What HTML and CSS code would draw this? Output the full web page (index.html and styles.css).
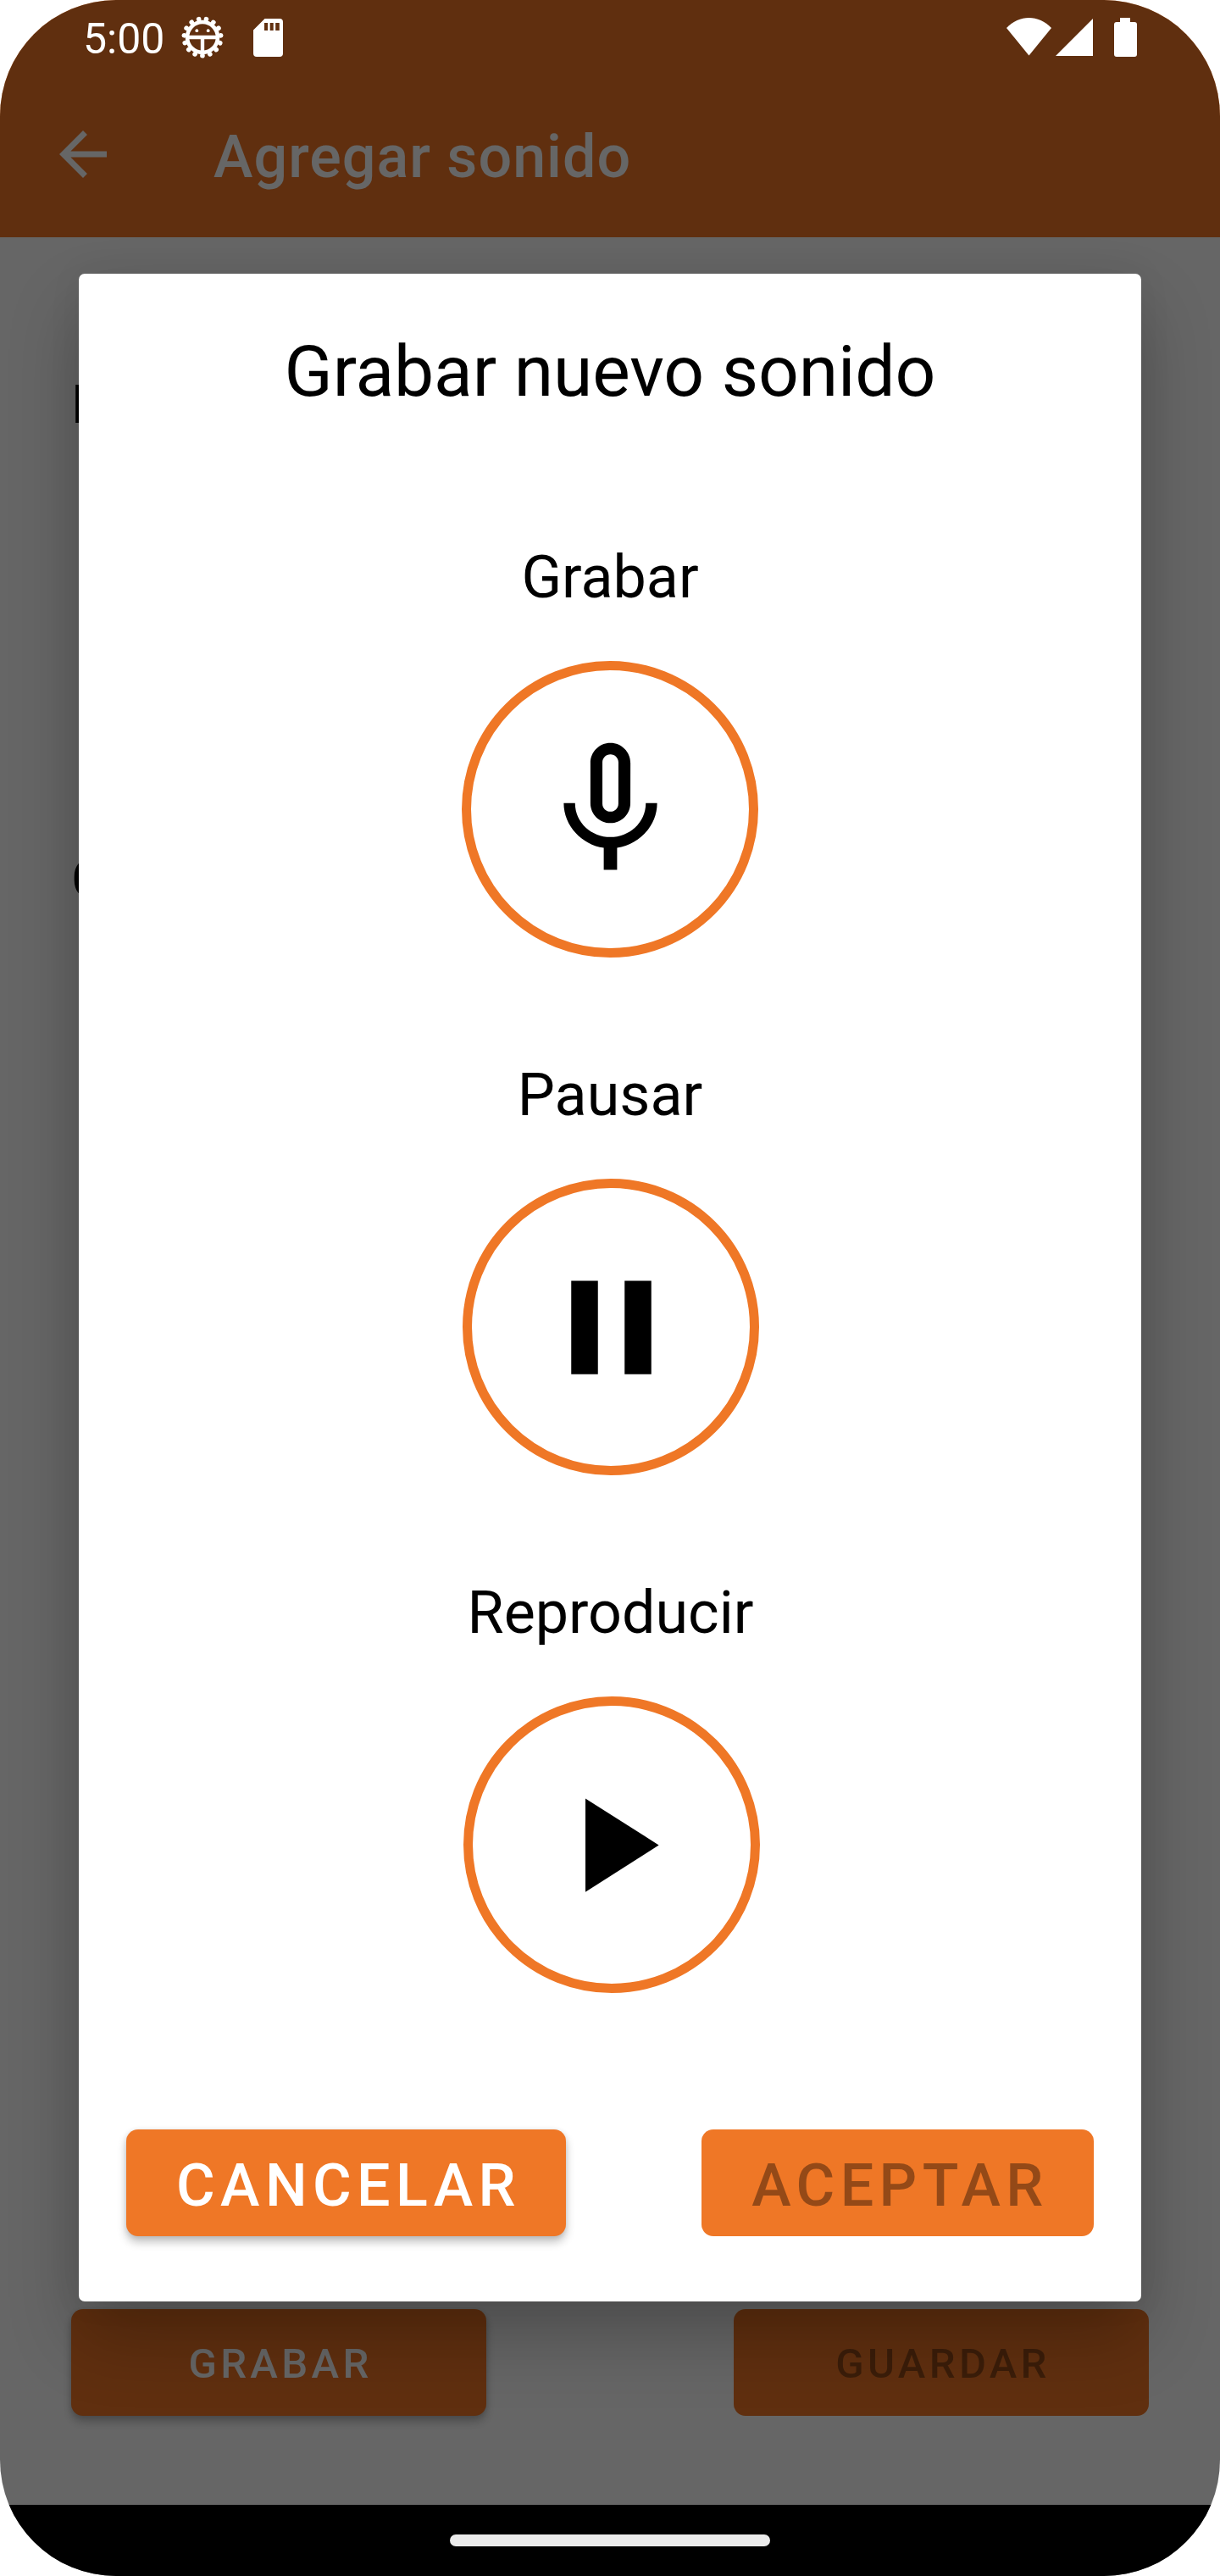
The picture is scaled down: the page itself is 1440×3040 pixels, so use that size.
FILE: index.html
```html
<!DOCTYPE html>
<html lang="es">
<head>
<meta charset="utf-8">
<title>Agregar sonido</title>
<link rel="stylesheet" href="styles.css">
</head>
<body>
<div class="screen">
  <header class="header">
    <div class="status-bar">
      <span class="time">5:00</span>
      <svg class="icon-debug" viewBox="-25 -25 50 50">
        <circle r="18" fill="none" stroke="#fff" stroke-width="4.600"/>
        <circle r="21.800" fill="none" stroke="#fff" stroke-width="5.600" stroke-linecap="round" pathLength="150" stroke-dasharray="0.1 9.9" stroke-dashoffset="-7.500"/>
        <path d="M-17 0H17M0 0V17" stroke="#fff" stroke-width="4.400"/>
        <circle cx="-6.700" cy="-7.800" r="1.900" fill="#fff"/>
        <circle cx="6.700" cy="-7.800" r="1.900" fill="#fff"/>
      </svg>
      <svg class="icon-sd" viewBox="0 0 35 45"><path fill="#fff" fill-rule="evenodd" d="M13.500 0H31a4 4 0 0 1 4 4V41a4 4 0 0 1-4 4H4a4 4 0 0 1-4-4V13.500ZM13 5v9h4V5ZM19.700 5v9h4V5ZM26.200 5v9h4.600V5Z"/></svg>
      <span class="spacer"></span>
      <svg class="icon-wifi" viewBox="0 0 53 45"><path fill="#fff" d="M0 12C15-4 38-4 53 12L26.500 44.500Z"/></svg>
      <svg class="icon-signal" viewBox="0 0 44 44"><path fill="#fff" d="M44 0V44H0Z"/></svg>
      <svg class="icon-battery" viewBox="0 0 27 46"><path fill="#fff" d="M7 0H19V5H24a3 3 0 0 1 3 3V43a3 3 0 0 1-3 3H3a3 3 0 0 1-3-3V8a3 3 0 0 1 3-3H7Z"/></svg>
    </div>
    <div class="toolbar">
      <svg class="icon-back" viewBox="0 0 24 24"><path fill="#fff" d="M20 11H7.830l5.590-5.590L12 4l-8 8 8 8 1.410-1.410L7.830 13H20v-2z"/></svg>
      <h1 class="toolbar-title">Agregar sonido</h1>
    </div>
  </header>
  <main class="form">
    <div class="field-label">N</div>
    <div class="field-label field-label-second">C</div>
    <div class="form-actions">
      <button class="btn btn-form">GRABAR</button>
      <button class="btn btn-form btn-disabled">GUARDAR</button>
    </div>
  </main>
  <footer class="nav-bar"><span class="nav-handle"></span></footer>
  <div class="scrim"></div>
  <section class="dialog">
    <h2 class="dialog-title">Grabar nuevo sonido</h2>
    <div class="control">
      <span class="control-label">Grabar</span>
      <span class="round-btn">
        <svg viewBox="0 0 24 24"><path d="M12 14c1.660 0 2.990-1.340 2.990-3L15 5c0-1.660-1.340-3-3-3S9 3.340 9 5v6c0 1.660 1.340 3 3 3zm-1.200-9.100c0-.66.54-1.200 1.200-1.200.66 0 1.200.54 1.200 1.200l-.01 6.200c0 .66-.53 1.200-1.190 1.200-.66 0-1.200-.54-1.200-1.200V4.900zm6.500 6.100c0 3-2.540 5.100-5.300 5.100S6.700 14 6.700 11H5c0 3.410 2.720 6.230 6 6.720V21h2v-3.280c3.280-.48 6-3.300 6-6.720h-1.700z"/></svg>
      </span>
    </div>
    <div class="control">
      <span class="control-label">Pausar</span>
      <span class="round-btn round-btn-pause">
        <svg viewBox="0 0 24 24"><path d="M6 19h4V5H6v14zm8-14v14h4V5h-4z"/></svg>
      </span>
    </div>
    <div class="control">
      <span class="control-label control-label-play">Reproducir</span>
      <span class="round-btn round-btn-play">
        <svg viewBox="0 0 24 24"><path d="M8 5v14l11-7z"/></svg>
      </span>
    </div>
    <div class="dialog-actions">
      <button class="btn btn-dialog btn-cancel">CANCELAR</button>
      <button class="btn btn-dialog btn-accept btn-disabled">ACEPTAR</button>
    </div>
  </section>
</div>
</body>
</html>
```
FILE: styles.css
```css
* { box-sizing: border-box; }

body {
  margin: 0;
  background: #fff;
  font-family: Roboto, sans-serif;
}

h1, h2 { margin: 0; }
svg { display: block; flex: none; }

.screen {
  position: relative;
  display: flex;
  flex-direction: column;
  width: 1440px;
  height: 3040px;
  overflow: hidden;
  border-radius: 137px;
  background: #fff;
}

/* Header */
.header { height: 280px; background: #ef7726; }

.status-bar {
  position: relative;
  z-index: 2;
  display: flex;
  align-items: flex-start;
  height: 84px;
  padding: 0 98px 0 98px;
  color: #fff;
}
.time { width: 116px; font-size: 50px; line-height: 92px; }
.icon-debug { width: 50px; height: 50px; margin-top: 19px; }
.icon-sd { width: 35px; height: 45px; margin: 22px 0 0 35px; }
.spacer { flex: 1; }
.icon-wifi { width: 53px; height: 45px; margin-top: 21px; }
.icon-signal { width: 44px; height: 44px; margin: 22px 25px 0 5px; }
.icon-battery { width: 27px; height: 46px; margin-top: 21px; }

.toolbar {
  display: flex;
  align-items: center;
  height: 196px;
  padding-left: 56px;
}
.icon-back { width: 84px; height: 84px; }
.toolbar-title {
  margin-left: 112px;
  padding-top: 6px;
  color: #fff;
  font-size: 70px;
  font-weight: 500;
  letter-spacing: 0.0145em;
  line-height: 82px;
}

/* Form behind the dialog */
.form {
  display: flex;
  flex-direction: column;
  height: 2676px;
  padding: 161px 84px 105px;
}
.field-label { font-size: 63px; line-height: 74px; color: #000; }
.field-label-second { margin-top: 486px; }
.form-actions {
  display: flex;
  justify-content: space-between;
  margin-top: auto;
}

.btn {
  height: 126px;
  border: 0;
  border-radius: 14px;
  background: #ef7726;
  color: #fff;
  font-family: inherit;
  font-weight: 500;
  letter-spacing: 0.0893em;
  line-height: 120px;
  white-space: nowrap;
  box-shadow: 0 7px 11px rgba(0, 0, 0, 0.24), 0 1px 6px rgba(0, 0, 0, 0.1);
}
.btn-form { width: 490px; padding: 4px 0 0 4px; font-size: 49px; }
.btn-dialog { padding: 6px 0 0 6px; font-size: 70px; letter-spacing: 0.091em; }
.btn-cancel { width: 519px; }
.btn-accept { width: 463px; }
.btn-disabled { color: rgba(0, 0, 0, 0.38); box-shadow: none; }

/* System navigation */
.nav-bar {
  position: relative;
  z-index: 2;
  display: flex;
  justify-content: center;
  height: 84px;
  padding-top: 35px;
  background: #000;
}
.nav-handle {
  width: 378px;
  height: 14px;
  border-radius: 7px;
  background: #ebebeb;
}

.scrim {
  position: absolute;
  inset: 0;
  z-index: 1;
  background: rgba(0, 0, 0, 0.6);
}

/* Dialog */
.dialog {
  position: absolute;
  z-index: 1;
  left: 93px;
  top: 323px;
  width: 1254px;
  height: 2393px;
  padding: 67px 56px 77px;
  display: flex;
  flex-direction: column;
  align-items: center;
  border-radius: 7px;
  background: #fff;
  color: #000;
  box-shadow: 0 42px 84px rgba(0, 0, 0, 0.24), 0 0 40px rgba(0, 0, 0, 0.06);
}
.dialog-title {
  margin-bottom: 152px;
  font-size: 84px;
  font-weight: 400;
  letter-spacing: -0.1px;
  line-height: 98px;
}
.control {
  display: flex;
  flex-direction: column;
  align-items: center;
  margin-bottom: 121px;
}
.control-label { font-size: 70px; line-height: 82px; }
.control-label-play { padding-left: 1px; }
.round-btn {
  display: flex;
  align-items: center;
  justify-content: center;
  width: 350px;
  height: 350px;
  margin-top: 58px;
  border: 11px solid #ef7726;
  border-radius: 50%;
}
.round-btn svg { width: 189px; height: 189px; margin-top: 1px; }
.round-btn-pause { transform: translateX(1px); }
.round-btn-play { transform: translateX(2px); }

.dialog-actions {
  display: flex;
  justify-content: space-between;
  align-self: stretch;
  margin-top: auto;
}
```
